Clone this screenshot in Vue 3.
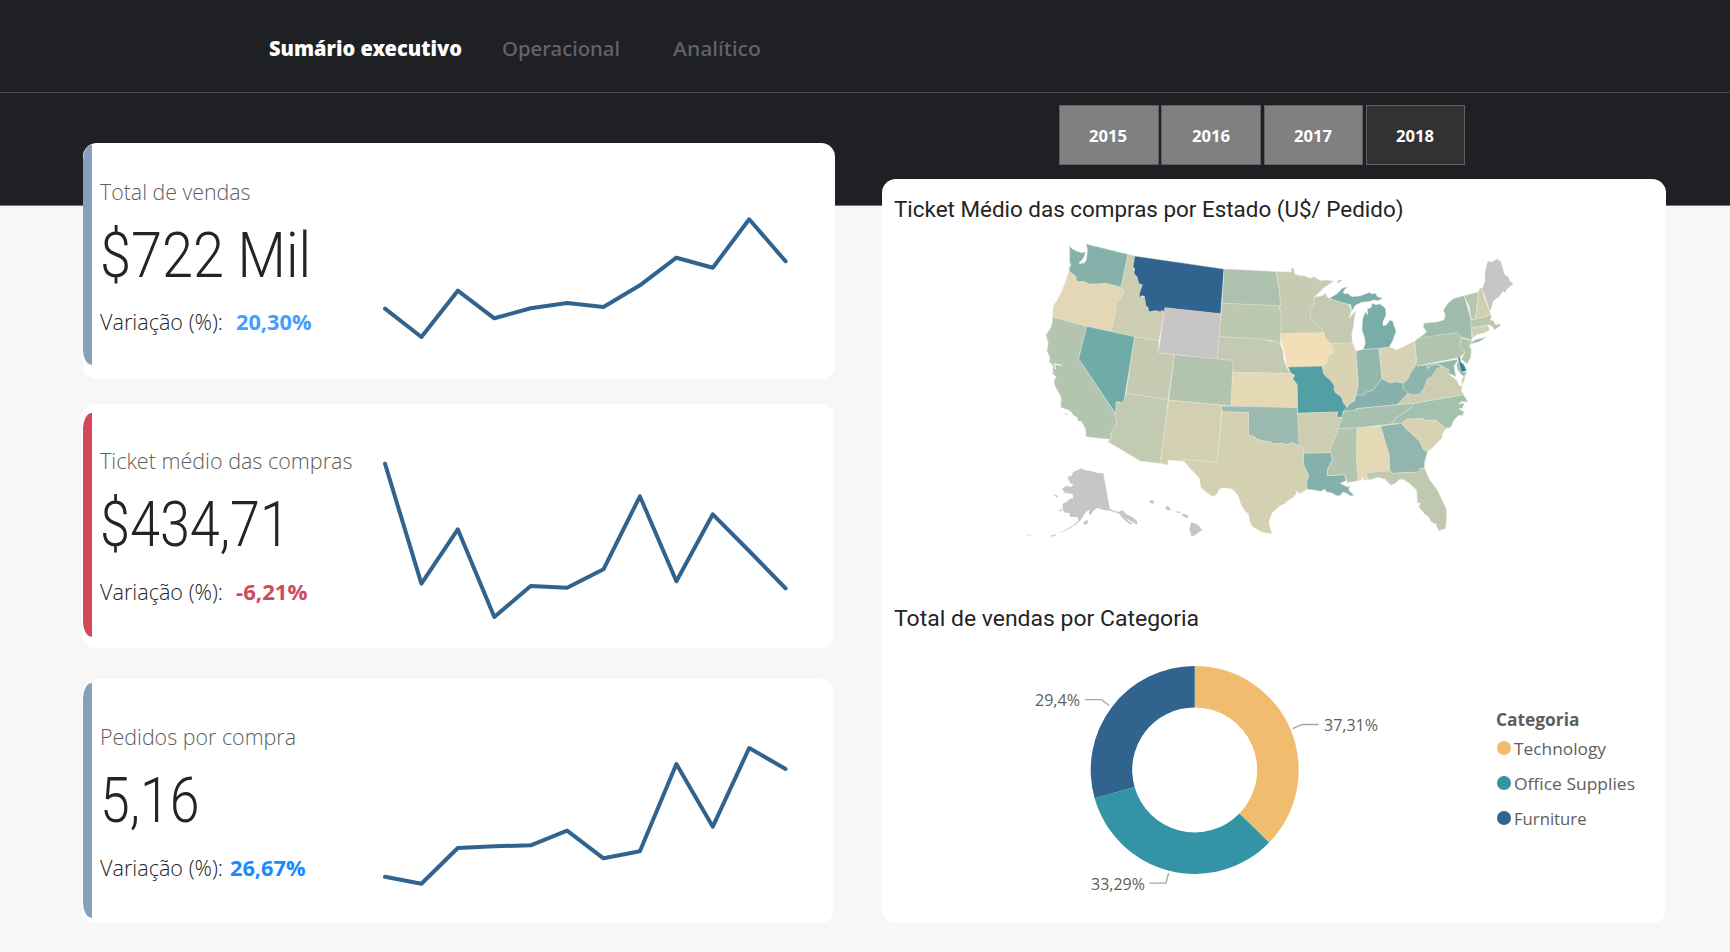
<script setup>
import { h } from 'vue'

// Single line of text whose baseline sits on the bottom edge of its box.
const FitText = (props) =>
  h('svg', { width: props.w, height: props.h, overflow: 'visible' }, [
    h('text', { x: 0, y: props.h, textLength: props.w, lengthAdjust: 'spacingAndGlyphs', fill: 'currentColor' }, props.text),
  ])
FitText.props = ['text', 'w', 'h']

const tabs = [
  { label: 'Sumário executivo', w: 193, active: true },
  { label: 'Operacional', w: 118 },
  { label: 'Analítico', w: 88 },
]

const years = ['2015', '2016', '2017', '2018']

const cards = [
  {
    key: 'sales', label: 'Total de vendas', lw: 150.5, value: '$722 Mil', vw: 211,
    delta: '20,30%', dw: 75.5, ys: [536, 621, 482, 565, 535, 519, 531, 466, 383, 413, 268, 394], top: 39,
  },
  {
    key: 'ticket', label: 'Ticket médio das compras', lw: 252.5, value: '$434,71', vw: 190,
    delta: '-6,21%', dw: 71.5, ys: [1001, 1361, 1198, 1461, 1368, 1373, 1318, 1099, 1354, 1153, 1263, 1375], top: 822,
  },
  {
    key: 'orders', label: 'Pedidos por compra', lw: 196, value: '5,16', vw: 99.5,
    delta: '26,67%', dw: 75.5, ys: [710, 731, 624, 619, 616, 572, 655, 634, 372, 560, 324, 387], top: 117,
  },
]
const line = (c) => c.ys.map((y, i) => `${(15 + i * 36.42).toFixed(1)},${((y - c.top) / 3).toFixed(1)}`).join(' ')

const slices = [
  { name: 'Technology', share: 37.31, color: '#f0bd6e', w: 92 },
  { name: 'Office Supplies', share: 33.29, color: '#3494a5', w: 121 },
  { name: 'Furniture', share: 29.4, color: '#30638e', w: 72.5 },
]
let acc = 0
const arcs = slices.map((s) => {
  const a0 = (acc / 100) * 2 * Math.PI
  acc += s.share
  const a1 = (acc / 100) * 2 * Math.PI
  const p = (r, a) => `${(r * Math.sin(a)).toFixed(2)} ${(-r * Math.cos(a)).toFixed(2)}`
  return { color: s.color, d: `M${p(104, a0)}A104 104 0 0 1 ${p(104, a1)}L${p(62.5, a1)}A62.5 62.5 0 0 0 ${p(62.5, a0)}Z` }
})

// Each entry: fill, x offset, y offset, outline
const states = [
  ['#b3c5ae', 0, 0, '128,260 230,289 206,386 315,550 321,578 308,600 302,614 304,626 300,628 228,620 227,596 222,588 214,574 203,572 203,562 190,556 184,546 175,540 152,532 154,506 150,494 140,478 133,462 133,450 139,442 128,430 130,412 126,402 118,396 120,384 111,362 115,340 108,314 122,294 127,276'],
  ['#e3d7b5', 0, 0, '177,124 180,124 197,138 200,155 222,154 236,161 258,162 288,160 333,172 342,186 332,208 318,220 319,234 304,305 230,289 128,260 130,228 148,200 165,160'],
  ['#86b1ab', 0, 0, '179,48 186,56 200,64 216,68 226,66 223,78 216,90 207,98 210,103 219,97 221,102 229,90 232,66 232,54 228,42 354,73 333,172 306,164 288,160 258,162 236,161 222,154 200,155 197,138 178,124 178,112 183,106 179,96'],
  ['#cccdb1', 0, 0, '354,73 374,78 369,110 376,130 386,150 397,164 388,202 402,200 410,222 416,245 440,243 464,240 447,332 374,320 304,305 319,234 318,220 332,208 342,186 333,172'],
  ['#30638e', 0, 0, '374,78 642,117 632,251 465,233 463,247 458,241 450,245 438,242 416,245 414,232 408,228 403,199 396,197 388,203 388,192 397,164 386,160 382,142 372,130 374,116 369,110'],
  ['#6faba9', 0, 0, '230,289 374,320 342,514 336,519 326,515 319,518 318,540 316,550 206,386'],
  ['#c8c6c5', 0, 0, '465,233 632,251 622,387 445,368'],
  ['#c5cbb1', 0, 0, '374,320 447,332 445,368 494,374 474,509 348,490'],
  ['#b2c4ae', 0, 0, '494,374 670,391 663,528 476,510'],
  ['#c2cab1', 0, 0, '348,490 475,509 450,700 391,693 294,635 300,628 304,626 302,614 308,600 321,578 316,560 319,516 334,519 342,514'],
  ['#d3d0b2', 0, 0, '476,510 636,526 622,697 519,688 524,694 474,690 474,704 450,700'],
  ['#acc2ae', 0, 0, '642,117 780,124 798,125 802,150 808,180 812,228 636,220'],
  ['#bcc8b0', 0, 0, '636,220 812,227 806,232 814,250 813,310 810,330 812,345 795,334 770,330 627,320'],
  ['#c3cab1', 0, 0, '627,320 765,328 775,333 795,334 810,342 818,360 822,390 829,411 842,430 668,427 670,391 622,387'],
  ['#e5d8b5', 0, 0, '668,427 840,430 852,433 848,446 858,458 862,465 862,533 663,529'],
  ['#9bbab0', 0, 0, '636,528 862,533 862,550 867,580 868,648 848,638 830,644 812,640 790,642 782,636 770,634 752,631 740,627 734,622 726,618 715,615 716,548 636,545'],
  ['#d4d1b2', 0, 0, '636,545 716,548 715,615 726,618 734,622 740,627 752,631 770,634 782,636 790,642 812,640 830,644 848,638 868,648 881,654 881,702 888,720 897,738 890,755 891,778 874,788 872,792 856,782 860,791 854,796 848,804 832,812 826,820 808,828 798,838 786,848 778,870 777,882 782,900 785,911 755,906 728,890 720,876 716,852 705,842 694,826 686,800 674,783 664,776 640,773 628,776 622,790 610,800 588,786 573,772 568,744 545,720 524,696 519,688 622,697'],
  ['#c7cbb1', 750, 0, '48,125 94,126 94,114 101,115 104,132 118,137 135,138 150,145 163,140 180,152 200,150 220,154 190,175 162,202 162,228 150,240 152,268 180,290 192,308 62,311 64,250 56,232 62,228 58,180'],
  ['#c4cab1', 750, 0, '163,202 185,198 198,190 200,200 208,206 240,216 266,224 274,242 267,266 277,254 286,244 280,290 275,310 277,340 214,341 196,326 192,308 180,290 152,268 150,240 162,228'],
  ['#f3deb7', 750, 0, '62,311 192,308 196,326 214,341 221,358 218,370 202,380 200,400 188,410 80,411 76,380 68,345 60,328'],
  ['#52a0a6', 750, 0, '84,411 186,408 192,430 212,450 224,468 226,486 244,500 258,528 262,536 250,544 246,562 230,562 233,546 113,550 112,465 106,456 98,446 104,436 92,428'],
  ['#d9d3b3', 750, 0, '214,341 277,338 288,362 292,440 295,478 288,492 284,514 270,520 262,530 250,520 244,500 228,490 222,480 224,468 212,450 200,442 190,430 188,410 200,400 202,380 218,370 221,358'],
  ['#92b7ad', 750, 0, '288,364 310,358 357,355 366,446 356,458 340,480 320,486 310,495 288,495 295,470'],
  ['#d6d2b3', 750, 0, '357,355 388,351 410,360 440,346 462,334 469,380 466,408 452,428 444,446 430,460 410,456 388,458 366,446'],
  ['#78adaa', 750, 0, '310,358 316,340 314,324 306,300 308,268 316,246 324,256 322,238 334,232 336,220 348,224 360,222 376,234 378,256 368,276 370,288 380,284 390,270 398,274 408,304 402,320 398,332 388,351 357,355'],
  ['#78adaa', 750, 0, '208,205 230,192 248,174 262,170 250,184 252,192 262,190 276,200 300,198 330,187 334,192 346,190 352,200 368,205 354,212 340,210 330,214 305,217 286,226 276,242 272,224 240,216'],
  ['#78adaa', 750, 0, '230,158 238,151 246,149 238,156'],
  ['#86b1ac', 750, 0, '288,495 310,495 320,486 340,480 356,458 366,446 388,458 410,456 430,460 429,474 444,490 412,524 288,536 288,542 250,545 262,530 270,520 284,514'],
  ['#a8c1ae', 750, 450, '252,94 288,92 290,86 412,74 462,70 452,84 430,100 410,112 394,132 290,144 235,146 240,120'],
  ['#cccdb1', 750, 450, '112,100 233,96 230,112 246,112 238,138 222,180 212,200 213,218 131,220 131,204 117,198'],
  ['#84b1ac', 750, 450, '131,220 213,218 217,240 202,270 202,287 254,284 258,302 240,310 252,316 264,322 270,314 266,330 274,338 282,346 272,348 260,340 248,336 242,346 230,347 214,338 200,336 194,328 182,334 160,330 141,328 140,305 147,288 138,270 131,252'],
  ['#b3c5ae', 750, 450, '235,146 291,143 290,250 295,302 262,308 254,284 202,287 202,270 217,240 211,205 222,180'],
  ['#e5d8b5', 750, 450, '291,143 362,138 388,226 390,272 318,278 324,298 312,301 308,290 302,302 294,300 290,250'],
  ['#90b6ad', 750, 450, '362,138 425,130 440,148 480,184 490,208 502,216 494,245 493,264 480,266 478,276 396,280 390,272 388,226'],
  ['#c0c9b0', 750, 450, '318,278 390,272 396,280 478,276 480,266 493,264 508,298 532,330 558,385 560,410 556,446 536,452 528,432 514,426 506,410 494,402 476,380 482,368 472,370 470,330 446,308 430,298 418,298 408,308 392,316 376,298 354,292 326,300'],
  ['#a4c0ae', 750, 450, '462,70 610,44 624,66 606,64 594,72 612,70 608,84 596,86 612,96 608,106 596,106 582,120 572,142 558,145 526,120 496,122 484,115 440,118 425,130 394,132 410,112 430,100 452,84'],
  ['#d6d2b3', 750, 450, '425,130 440,118 484,115 496,122 526,120 558,145 548,160 546,174 530,190 520,200 502,216 490,208 480,184 440,148'],
  ['#cccdb1', 750, 0, '412,524 444,490 460,495 480,492 494,470 502,446 516,440 530,416 546,410 570,420 568,434 590,450 594,462 606,472 604,484 612,494 462,520'],
  ['#8fb6ad', 750, 0, '430,460 444,446 452,428 466,408 468,386 472,408 500,404 504,416 514,406 530,402 546,410 530,416 516,440 502,446 494,470 480,492 460,495 444,490 429,474'],
  ['#92b7ad', 750, 0, '500,404 594,388 590,396 582,408 584,420 588,440 580,436 566,430 568,420 546,408 530,402 514,406 504,414'],
  ['#92b7ad', 750, 0, '595,390 603,426 620,426 614,440 604,434 594,420 590,406'],
  ['#cccdb1', 750, 0, '618,428 614,446 606,468 606,448'],
  ['#b1c4ae', 750, 0, '464,334 478,322 590,308 604,322 600,350 616,366 600,382 472,408'],
  ['#9fbcaf', 750, 0, '478,324 500,306 490,290 492,280 530,276 552,270 556,256 550,240 564,220 580,206 612,197 622,230 632,264 634,300 636,330 604,322 590,308'],
  ['#9fbcaf', 750, 0, '630,343 644,330 680,320 660,334'],
  ['#b1c4ae', 750, 0, '604,324 636,332 628,348 634,360 632,382 622,402 604,388 616,366 600,350'],
  ['#2f7f9f', 750, 0, '594,382 600,381 602,396 612,404 620,422 603,426'],
  ['#b6c6af', 750, 0, '612,197 655,186 652,215 646,268 634,268 628,230'],
  ['#cfd0b2', 750, 0, '655,186 660,175 667,174 672,200 690,248 680,260 647,268'],
  ['#c8c6c5', 750, 0, '667,176 674,156 676,120 684,92 694,97 710,87 722,94 734,134 746,142 748,152 760,160 752,168 740,178 736,188 728,184 718,200 708,206 700,214 690,244'],
  ['#b9c7af', 750, 0, '632,270 680,260 690,250 694,260 690,270 700,272 706,284 718,282 712,276 722,286 704,300 698,290 686,284 632,294'],
  ['#cfd0b1', 750, 0, '634,294 676,287 678,306 650,314 638,324'],
  ['#c6cbb1', 750, 0, '676,287 684,286 688,300 678,306'],
  ['#c8c6c5', 0, 450, '172,290 184,288 190,276 204,270 215,265 222,270 240,272 260,278 280,280 299,386 312,392 326,396 336,390 352,404 366,410 382,424 380,434 368,426 352,418 338,408 324,400 300,392 280,390 262,384 250,392 242,406 236,400 240,386 226,398 212,420 196,434 178,446 150,459 152,456 176,444 192,434 204,422 204,412 180,410 178,398 164,398 158,388 158,372 172,364 180,356 190,354 188,342 164,338 156,326 168,318 184,320 190,314 180,308'],
  ['#c8c6c5', 0, 450, '330,400 342,408 356,424 368,430 362,434 346,422 332,408'],
  ['#c8c6c5', 0, 450, '218,432 228,420 236,424 230,434'],
  ['#c8c6c5', 0, 450, '132,342 144,348 144,354 134,348'],
  ['#c8c6c5', 0, 450, '120,468 136,462 138,466 124,470'],
  ['#c8c6c5', 0, 450, '147,389 156,388 156,393 149,394'],
  ['#c8c6c5', 0, 450, '418,364 426,359 433,363 430,371 420,369'],
  ['#c8c6c5', 0, 450, '466,382 474,378 484,389 470,391'],
  ['#c8c6c5', 0, 450, '497,394 514,396 510,399 498,397'],
  ['#c8c6c5', 0, 450, '514,402 524,402 536,407 530,415 520,409'],
  ['#c8c6c5', 0, 450, '538,446 544,426 564,434 576,450 560,462 545,471'],
]
</script>

<template>
  <div class="page">
    <nav class="nav">
      <FitText v-for="t in tabs" :key="t.label" class="tab" :class="{ active: t.active }" :text="t.label" :w="t.w" :h="20" />
    </nav>

    <main class="main">
      <section class="left">
        <article v-for="c in cards" :key="c.key" class="card" :class="c.key">
          <i class="accent"></i>
          <div class="kpi">
            <FitText class="label" :text="c.label" :w="c.lw" :h="20" />
            <FitText class="value" :text="c.value" :w="c.vw" :h="50" />
            <div class="change">
              <FitText class="caption" text="Variação (%):" :w="123" :h="20" />
              <FitText class="delta" :text="c.delta" :w="c.dw" :h="20" />
            </div>
          </div>
          <svg class="spark" width="440" height="236"><polyline :points="line(c)" /></svg>
        </article>
      </section>

      <section class="right">
        <div class="years">
          <button v-for="y in years" :key="y" class="year" :class="{ on: y === '2018' }">
            <FitText :text="y" :w="38" :h="12" />
          </button>
        </div>
        <div class="panel">
          <FitText class="title" text="Ticket Médio das compras por Estado (U$/ Pedido)" :w="509.5" :h="20" />
          <svg class="map" width="520" height="330" viewBox="0 0 1560 990">
            <polygon v-for="(s, i) in states" :key="i" :fill="s[0]" :points="s[3]" :transform="`translate(${s[1]} ${s[2]})`" :class="{ isle: s[0] === '#c8c6c5' }" />
            <path class="water" d="M133 400l4 18M134 402l22 4" />
            <path class="dots" d="M165 552h8M50 915h5M60 917h4M78 918h3" />
          </svg>
          <FitText class="title second" text="Total de vendas por Categoria" :w="305" :h="20" />
          <div class="breakdown">
            <svg class="donut" width="350" height="240" viewBox="1032 655 350 240">
              <g transform="translate(1194.7 769.9)">
                <path v-for="a in arcs" :key="a.color" :d="a.d" :fill="a.color" />
              </g>
              <g class="leaders">
                <polyline points="1085,699.7 1101.5,699.7 1109.6,705.7" />
                <polyline points="1292.7,728.7 1302,724.5 1318.5,724.5" />
                <polyline points="1149.2,883.2 1166,883.2 1168.6,873" />
              </g>
              <g class="shares">
                <text x="1035" y="706" textLength="45" lengthAdjust="spacingAndGlyphs">29,4%</text>
                <text x="1324" y="731" textLength="54" lengthAdjust="spacingAndGlyphs">37,31%</text>
                <text x="1091" y="890" textLength="54" lengthAdjust="spacingAndGlyphs">33,29%</text>
              </g>
            </svg>
            <div class="legend">
              <FitText class="legend-title" text="Categoria" :w="83.5" :h="14" />
              <div v-for="s in slices" :key="s.name" class="item">
                <svg width="14" height="14"><circle cx="7" cy="7" r="7" :fill="s.color" /></svg>
                <FitText class="name" :text="s.name" :w="s.w" :h="14" />
              </div>
            </div>
          </div>
        </div>
      </section>
    </main>
  </div>
</template>

<style>
body {
  margin: 0;
  overflow: hidden;
}
</style>

<style scoped>
.page {
  width: 1730px;
  height: 952px;
  box-sizing: border-box;
  overflow: hidden;
  background: linear-gradient(#1f2024 205px, #77777a 205px, #77777a 206px, #f7f7f7 206px);
  font-family: 'Open Sans', 'Noto Sans', sans-serif;
}
svg {
  display: block;
  flex: none;
}
.nav {
  display: flex;
  height: 93px;
  box-sizing: border-box;
  padding: 35.5px 0 0 269px;
  border-bottom: 1px solid #48494d;
}
.tab {
  font-family: 'Noto Sans', sans-serif;
  font-size: 20.5px;
  font-weight: 500;
  color: #64616f;
  margin-right: 53.5px;
}
.tab.active {
  font-weight: 900;
  color: #fff;
  margin-right: 39.5px;
}
.main {
  display: flex;
  align-items: flex-start;
  height: 859px;
}
.left {
  width: 752px;
  padding: 50px 0 0 82px;
}
.card {
  display: flex;
  width: 752px;
  height: 244px;
  border-radius: 14px;
  background: #fff;
  margin-bottom: 31px;
}
.card.sales {
  height: 236px;
  margin: 0 0 25px 1px;
}
.accent {
  flex: none;
  width: 8.5px;
  height: 224px;
  margin: 9px 0 0 1px;
  background: #84a0bb;
  border-radius: 9px 0 0 9px / 15px 0 0 15px;
}
.sales .accent {
  height: 220px;
  margin: 2px 0 0;
}
.ticket .accent {
  background: #d2495c;
}
.orders .accent {
  height: 235px;
  margin-top: 4px;
}
.kpi {
  width: 270px;
  flex: none;
  padding: 45px 0 0 8.5px;
}
.sales .kpi {
  padding-top: 37px;
}
.orders .kpi {
  padding-top: 46px;
}
.label {
  font-size: 22.5px;
  font-weight: 350;
  color: #605e5c;
}
.value {
  margin: 27px 0 34px 0;
  font-family: Roboto, sans-serif;
  font-size: 63.5px;
  font-weight: 300;
  color: #252423;
}
.sales .value {
  margin-bottom: 33px;
}
.change {
  display: flex;
  gap: 12.5px;
}
.orders .change {
  gap: 6.5px;
}
.caption {
  font-size: 22px;
  font-weight: 350;
  color: #252423;
}
.delta {
  font-size: 21.5px;
  font-weight: 700;
  color: #449eff;
}
.ticket .delta {
  color: #d2495c;
}
.orders .delta {
  color: #168bff;
}
.spark {
  overflow: visible;
}
.spark polyline {
  fill: none;
  stroke: #30638e;
  stroke-width: 4;
  stroke-linecap: round;
  stroke-linejoin: round;
}
.right {
  padding: 12px 0 0 48px;
}
.years {
  display: flex;
  gap: 2.8px;
  margin-left: 177px;
}
.year {
  display: flex;
  align-items: center;
  justify-content: center;
  width: 99.5px;
  height: 60px;
  padding: 2px 1px 0 0;
  box-sizing: border-box;
  border: 1px solid #606060;
  background: #808080;
  color: #fff;
  font-family: inherit;
  font-size: 15.8px;
  font-weight: 700;
}
.year.on {
  background: #323232;
}
.panel {
  width: 784px;
  height: 744px;
  box-sizing: border-box;
  margin-top: 14px;
  padding: 18px 0 0 11.5px;
  border-radius: 14px;
  background: #fff;
}
.title {
  font-family: Roboto, sans-serif;
  font-size: 22.4px;
  color: #252423;
}
.map {
  margin: 13px 0 0 116.5px;
}
.map polygon {
  stroke: rgba(225, 230, 214, 0.6);
  stroke-width: 2.2;
  stroke-linejoin: round;
}
.map .isle {
  stroke: none;
}
.water {
  fill: none;
  stroke: #fff;
  stroke-width: 3;
}
.dots {
  fill: none;
  stroke: #c8c6c5;
  stroke-width: 3;
}
.second {
  margin-top: 45.5px;
}
.breakdown {
  display: flex;
  margin-top: 29.5px;
}
.donut {
  margin-left: 138.5px;
}
.leaders polyline {
  fill: none;
  stroke: #a6a6a6;
  stroke-width: 1.3;
}
.shares {
  font-size: 16.5px;
  font-weight: 375;
  fill: #605e5c;
}
.legend {
  padding: 57px 0 0 114px;
}
.legend-title {
  font-size: 17px;
  font-weight: 700;
  color: #605e5c;
  margin-bottom: 15px;
}
.item {
  display: flex;
  gap: 3.5px;
  height: 14px;
  margin: 0 0 21px 0.5px;
}
.name {
  font-size: 17px;
  font-weight: 375;
  color: #605e5c;
}
</style>
